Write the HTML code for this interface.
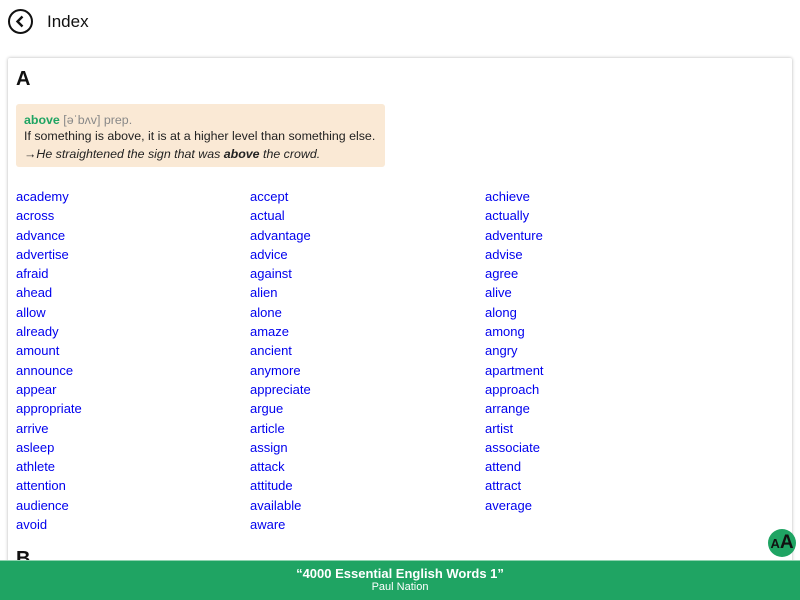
<!DOCTYPE html>
<html><head><meta charset="utf-8"><style>
html,body{margin:0;width:800px;height:600px;overflow:hidden}
body{background:#fff;font-family:"Liberation Sans",sans-serif;position:relative}
.hdr{position:absolute;left:0;top:0;width:800px;height:45px}
.back{position:absolute;left:8px;top:9px;width:25px;height:25px;border:2px solid #111;border-radius:50%;box-sizing:border-box}
.title{position:absolute;left:47px;top:12px;font-size:17px;color:#111}
.card{position:absolute;left:8px;top:58px;width:784px;height:510px;box-shadow:0 0 3px rgba(0,0,0,.3);border-radius:2px;background:#fff}
.A{position:absolute;left:8px;top:10px;font-size:20px;font-weight:bold;color:#111}
.B{position:absolute;left:8px;top:490px;font-size:20px;font-weight:bold;color:#111}
.def{position:absolute;left:8px;top:46px;width:369px;height:63px;background:#fae9d5;border-radius:3px;font-size:12.4px;color:#222;box-sizing:border-box;padding:8px 8px 0;white-space:nowrap}
.def div{height:16px;line-height:16px}
.g{color:#1fa463;font-weight:bold}.gr{color:#888}
.col{position:absolute;top:129px;font-size:13px;color:#0000ee;line-height:19.3px}
.foot{position:absolute;left:0;top:560px;width:800px;height:40px;background:#1fa463;color:#fff;text-align:center;font-size:11px;border-top:1px solid #8fd3b0;box-sizing:border-box}
.aa{position:absolute;left:768px;top:529px;width:28px;height:28px;border-radius:50%;background:#1fa463;color:#111;font-weight:bold;text-align:center;line-height:28px}
</style></head><body>
<div class="hdr"><div class="back"><svg width="21" height="21" viewBox="0 0 21 21"><path d="M12.5 5.5 L7.5 10.5 L12.5 15.5" fill="none" stroke="#111" stroke-width="2.4"/></svg></div><div class="title">Index</div></div>
<div class="card">
<div class="A">A</div>
<div class="def"><div><span class="g">above</span> <span class="gr">[əˈbʌv] prep.</span></div><div>If something is above, it is at a higher level than something else.</div><div style="margin-top:2px"><i>→He straightened the sign that was <b>above</b> the crowd.</i></div></div>
<div class="col" style="left:8px">academy<br>across<br>advance<br>advertise<br>afraid<br>ahead<br>allow<br>already<br>amount<br>announce<br>appear<br>appropriate<br>arrive<br>asleep<br>athlete<br>attention<br>audience<br>avoid</div>
<div class="col" style="left:242px">accept<br>actual<br>advantage<br>advice<br>against<br>alien<br>alone<br>amaze<br>ancient<br>anymore<br>appreciate<br>argue<br>article<br>assign<br>attack<br>attitude<br>available<br>aware</div>
<div class="col" style="left:477px">achieve<br>actually<br>adventure<br>advise<br>agree<br>alive<br>along<br>among<br>angry<br>apartment<br>approach<br>arrange<br>artist<br>associate<br>attend<br>attract<br>average</div>
<div class="B">B</div>
</div>
<div class="aa"><span style="font-size:13px">A</span><span style="font-size:19px">A</span></div>
<div class="foot"><div style="font-weight:bold;font-size:13px;margin-top:5px">“4000 Essential English Words 1”</div><div>Paul Nation</div></div>
</body></html>
